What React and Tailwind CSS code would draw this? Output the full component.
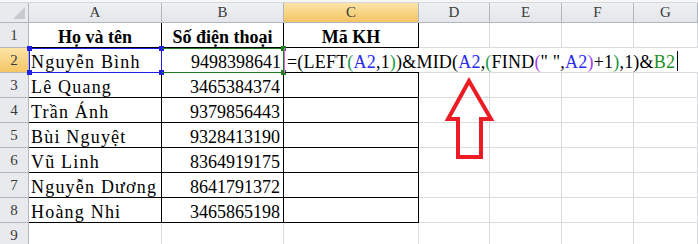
const COLS = ["A", "B", "C", "D", "E", "F", "G"];
const WIDTHS = [133, 122, 135, 71, 72, 72, 64];

const people = [
  ["Lê Quang", "3465384374"],
  ["Trần Ánh", "9379856443"],
  ["Bùi Nguyệt", "9328413190"],
  ["Vũ Linh", "8364919175"],
  ["Nguyễn Dương", "8641791372"],
  ["Hoàng Nhi", "3465865198"],
];

// formula pieces, coloured the way Excel colours refs and paren pairs
const formula = [
  ["=(LEFT", "text-black"],
  ["(", "text-[#1a9a4a]"],
  ["A2", "text-[#2b2bf0]"],
  [",1", "text-black"],
  [")", "text-[#1a9a4a]"],
  [")&MID(", "text-black"],
  ["A2", "text-[#2b2bf0]"],
  [",", "text-black"],
  ["(", "text-[#1a9a4a]"],
  ["FIND", "text-black"],
  ["(", "text-[#a03cf0]"],
  ['" ",', "text-black"],
  ["A2", "text-[#2b2bf0]"],
  [")", "text-[#a03cf0]"],
  ["+1", "text-black"],
  [")", "text-[#1a9a4a]"],
  [",1)&", "text-black"],
  ["B2", "text-[#1c8f1c]"],
];

function RowHead({ n, active }) {
  return (
    <div
      className={
        "flex h-full w-[29px] shrink-0 items-center justify-center border-r border-b border-[#b1b6bd] text-[15px] text-[#3b3b3b] " +
        (active
          ? "bg-linear-to-b from-[#fce4a6] to-[#f4c563]"
          : "bg-[#e8eaed]")
      }
    >
      {n}
    </div>
  );
}

function Cell({ w, dark, right, bold, center, wide, children }) {
  return (
    <div
      style={{ width: w }}
      className={
        "flex h-full shrink-0 items-end overflow-visible whitespace-nowrap border-r border-b px-[2px] pb-[1px] leading-none " +
        (dark ? "border-black " : "border-[#dadcdd] ") +
        (right ? "justify-end pr-[3px] " : center ? "justify-center " : "justify-start ") +
        (bold ? "font-bold " : "") +
        (wide ? "tracking-[1.2px]" : "")
      }
    >
      {children}
    </div>
  );
}

function Handle({ className }) {
  return <span className={"absolute h-[5px] w-[5px] " + className} />;
}

export default function App() {
  return (
    <div className="relative h-[244px] w-[698px] overflow-hidden bg-white font-['Liberation_Serif','Times_New_Roman',serif] text-[18px] text-black">
      <div className="h-[3px] border-b border-[#d5d8dc] bg-[#f7f7f7]" />

      {/* column headers */}
      <div className="flex h-[20px]">
        <div className="relative w-[29px] shrink-0 border-r border-b border-[#b1b6bd] bg-[#e8eaed]">
          <svg className="absolute right-[3px] bottom-[3px]" width="12" height="12">
            <polygon points="12,0 12,12 0,12" fill="#c7cbd0" />
          </svg>
        </div>
        {COLS.map((c, i) => (
          <div
            key={c}
            style={{ width: WIDTHS[i] }}
            className={
              "flex shrink-0 items-center justify-center border-r border-b border-[#b1b6bd] text-[15px] text-[#3b3b3b] " +
              (c === "C"
                ? "bg-linear-to-b from-[#fce4a6] to-[#f4c563]"
                : "bg-linear-to-b from-[#eef0f2] to-[#e3e6ea]")
            }
          >
            {c}
          </div>
        ))}
      </div>

      {/* row 1 */}
      <div className="flex h-[25px]">
        <RowHead n={1} />
        <Cell w={133} dark bold center>Họ và tên</Cell>
        <Cell w={122} dark bold center>Số điện thoại</Cell>
        <Cell w={135} dark bold center>Mã KH</Cell>
        <Cell w={71} />
        <Cell w={72} />
        <Cell w={72} />
        <Cell w={64} />
      </div>

      {/* row 2 - editing C2 */}
      <div className="flex h-[25px]">
        <RowHead n={2} active />
        <div className="relative flex h-full w-[133px] shrink-0 items-end border border-[#1f1fe8] pb-[1px] pl-[1px] leading-none tracking-[1.2px]">
          Nguyễn Bình
          <Handle className="-top-[3px] -left-[3px] bg-[#1f1fe8]" />
          <Handle className="-bottom-[3px] -left-[3px] bg-[#1f1fe8]" />
          <Handle className="-top-[3px] -right-[3px] bg-[#1f1fe8]" />
          <Handle className="-bottom-[3px] -right-[3px] bg-[#1f1fe8]" />
        </div>
        <div className="relative flex h-full w-[122px] shrink-0 items-end justify-end border-y border-r border-[#1e7d1e] pr-[2px] pb-[1px] leading-none">
          9498398641
          <Handle className="-top-[3px] -right-[3px] bg-[#1e7d1e]" />
          <Handle className="-bottom-[3px] -right-[3px] bg-[#1e7d1e]" />
        </div>
        <div className="relative flex h-full flex-1 border-l border-[#e060e0]">
          <div className="h-full w-[134px] border-b border-black" />
          <div className="h-full flex-1 border-b border-[#dadcdd]" />
          <div className="absolute bottom-[2px] left-[2px] flex items-end whitespace-nowrap leading-none tracking-[0.2px]">
            {formula.map(([t, cls], i) => (
              <span key={i} className={cls}>
                {t}
              </span>
            ))}
            <span className="ml-[2px] h-[20px] w-px bg-black" />
          </div>
        </div>
      </div>

      {/* rows 3-8 */}
      {people.map(([name, phone], i) => (
        <div key={name} className="flex h-[25px]">
          <RowHead n={i + 3} />
          <Cell w={133} dark wide>{name}</Cell>
          <Cell w={122} dark right>{phone}</Cell>
          <Cell w={135} dark />
          <Cell w={71} />
          <Cell w={72} />
          <Cell w={72} />
          <Cell w={64} />
        </div>
      ))}

      {/* row 9 */}
      <div className="flex h-[25px]">
        <RowHead n={9} />
        {WIDTHS.map((w, i) => (
          <Cell key={i} w={w} />
        ))}
      </div>

      {/* red arrow annotation */}
      <svg
        className="pointer-events-none absolute top-0 left-0"
        width="698"
        height="244"
      >
        <polygon
          points="469,81 448,119 458,119 458,157 481,157 481,119 491,119"
          fill="none"
          stroke="#ed1c24"
          strokeWidth="4"
          strokeLinejoin="miter"
          strokeMiterlimit="10"
        />
      </svg>
    </div>
  );
}
